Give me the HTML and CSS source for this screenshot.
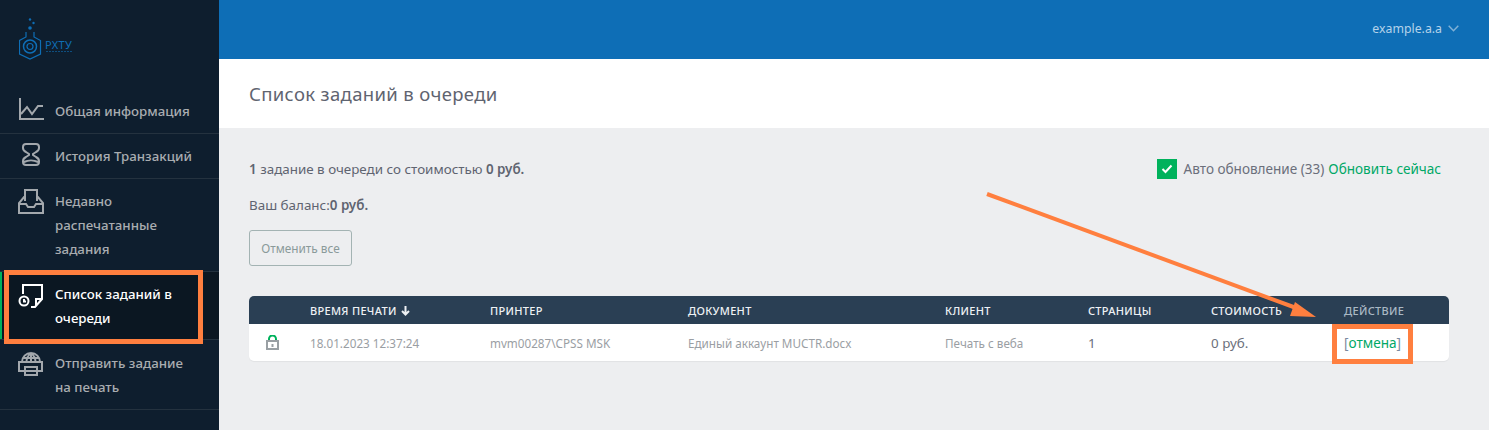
FILE: index.html
```html
<!DOCTYPE html>
<html lang="ru">
<head>
<meta charset="utf-8">
<title>Список заданий в очереди</title>
<link rel="stylesheet" href="styles.css">
</head>
<body>
<div class="app">
  <aside class="sidebar">
    <div class="logo">
      <svg width="56" height="46" viewBox="0 0 56 46" fill="none" stroke="#0e6eb6" stroke-width="1.2">
        <circle cx="11" cy="1.500" r="1.200" fill="#0e6eb6" stroke="none"/>
        <circle cx="14.500" cy="5" r="1.200" fill="#0e6eb6" stroke="none"/>
        <circle cx="11" cy="10" r="1.800" fill="#0e6eb6" stroke="none"/>
        <path d="M7 14v5l-6.500 3.500v13.500L11 41l10.500-5V22.500L15 19v-5"/>
        <circle cx="11" cy="28.500" r="6.500" stroke-width="1.500"/>
        <circle cx="11" cy="28.500" r="3"/>
        <path d="M27 33.500h26" stroke-dasharray="2 1" stroke-width="1" opacity=".6"/>
      </svg>
      <span class="logo-text">РХТУ</span>
    </div>
    <nav class="menu">
      <a class="item one">
        <svg class="ico" width="26" height="24" viewBox="0 0 26 24" fill="none" stroke="#a3a8ad" stroke-width="2"><path d="M2 0v21h24M3 16l6-7 5 7 6-8h5"/></svg>
        <span>Общая информация</span>
      </a>
      <a class="item two">
        <svg class="ico" width="26" height="24" viewBox="0 0 26 24" fill="none" stroke="#a3a8ad" stroke-width="2"><path d="M8 1h10a3 3 0 0 1 3 3v1c0 2-1 3-3 4l-3 2v1l3 2c2 1 3 2 3 4v1a3 3 0 0 1-3 3H8a3 3 0 0 1-3-3v-1c0-2 1-3 3-4l3-2v-1L8 9C6 8 5 7 5 5V4a3 3 0 0 1 3-3zM6 19c4-2 10-2 14 0"/></svg>
        <span>История Транзакций</span>
      </a>
      <a class="item three">
        <svg class="ico" width="26" height="26" viewBox="0 0 26 26" fill="none" stroke="#a3a8ad" stroke-width="2"><path d="M7 12V1h12v11M7 7L1 14v10h24V14l-6-7M1 15h7l2 3h6l2-3h7"/></svg>
        <span>Недавно распечатанные задания</span>
      </a>
      <a class="item four active">
        <svg class="ico" width="26" height="26" viewBox="0 0 26 26" fill="none" stroke="#fff" stroke-width="2"><path d="M5 11V2h19v14l-7 8h-4M24 16h-6v7"/><circle cx="6" cy="18" r="4.500"/><path d="M6 16v2.500h2"/></svg>
        <span>Список заданий в очереди</span>
      </a>
      <a class="item five">
        <svg class="ico" width="26" height="26" viewBox="0 0 26 26" fill="none" stroke="#a3a8ad" stroke-width="2"><path d="M4 11a9 9 0 0 1 18 0M13 2v9M8.500 11c0-4 2-7 4.500-9 2.500 2 4.500 5 4.500 9M5 7h16M2 11h22v9H1v-9zM7 16h12v8H7z"/></svg>
        <span>Отправить задание на печать</span>
      </a>
    </nav>
  </aside>
  <main class="main">
    <header class="topbar">
      <span class="user">example.a.a</span>
      <svg width="11" height="7" viewBox="0 0 11 7" fill="none" stroke="#7fb0d6" stroke-width="1.500"><path d="M.7 .7l4.800 5 4.800-5"/></svg>
    </header>
    <div class="title-bar"><h1>Список заданий в очереди</h1></div>
    <section class="content">
      <div class="info-row">
        <p class="summary"><b>1</b> задание в очереди со стоимостью <b>0 руб.</b></p>
        <div class="refresh">
          <span class="check"><svg width="12" height="10" viewBox="0 0 12 10" fill="none" stroke="#fff" stroke-width="2"><path d="M1.500 5l3 3 6-6.500"/></svg></span>
          <span>Авто обновление (33)</span>
          <a class="link">Обновить сейчас</a>
        </div>
      </div>
      <p class="balance">Ваш баланс:<b>0 руб.</b></p>
      <button class="cancel-all">Отменить все</button>
      <div class="table">
        <div class="row head">
          <span></span>
          <span class="sort">ВРЕМЯ ПЕЧАТИ <svg width="9" height="10" viewBox="0 0 9 10" fill="none" stroke="#eef1f4" stroke-width="2"><path d="M4.500 0v8M1 5l3.500 3.500L8 5"/></svg></span>
          <span>ПРИНТЕР</span>
          <span>ДОКУМЕНТ</span>
          <span>КЛИЕНТ</span>
          <span>СТРАНИЦЫ</span>
          <span>СТОИМОСТЬ</span>
          <span class="dim">ДЕЙСТВИЕ</span>
        </div>
        <div class="row body">
          <span class="lock"><svg width="13" height="15" viewBox="0 0 13 15" fill="none"><path d="M3 6V4a3.500 3.500 0 0 1 7 0v2" stroke="#00b25c" stroke-width="2"/><path d="M1 6h11v8H1z" stroke="#9aa0a4" stroke-width="2"/><path d="M5.500 9h2v3h-2z" fill="#9aa0a4"/></svg></span>
          <span>18.01.2023 12:37:24</span>
          <span>mvm00287\CPSS MSK</span>
          <span>Единый аккаунт MUCTR.docx</span>
          <span>Печать с веба</span>
          <span class="strong">1</span>
          <span class="strong">0 руб.</span>
          <span class="action">[<a class="link">отмена</a>]</span>
        </div>
      </div>
    </section>
  </main>
</div>
<div class="mark mark-menu"></div>
<div class="mark mark-cancel"></div>
<svg class="mark-arrow" width="360" height="140" viewBox="0 0 360 140"><path d="M3 4L315 119" stroke="#ff7f3f" stroke-width="4" fill="none"/><path d="M306 126L311 112 332 127z" fill="#ff7f3f"/></svg>
</body>
</html>
```
FILE: styles.css
```css
* { box-sizing: border-box; }
html, body { margin: 0; height: 100%; overflow: hidden; }
body { font-family: "Noto Sans", "Open Sans", sans-serif; font-size: 13.400px; color: #5f6470; background: #edeef0; position: relative; }
.app { display: flex; height: 430px; }
.sidebar { width: 219px; flex: none; background: #0e1e2e; }
.logo { height: 90px; padding: 18px 0 0 19px; display: flex; align-items: flex-start; position: relative; }
.logo svg { flex: none; }
.logo-text { position: absolute; left: 45px; top: 38px; font-size: 11px; line-height: 13px; color: #0e6eb6; letter-spacing: .3px; }
.menu { display: flex; flex-direction: column; }
.item { display: flex; align-items: flex-start; padding-left: 18px; color: #a9adb1; font-weight: 500; font-size: 13.300px; line-height: 24px; border-bottom: 1px solid #24323f; }
.item .ico { flex: none; margin-right: 11px; }
.item span { display: block; width: 140px; }
.one { height: 44px; padding-top: 9px; }
.one .ico { margin-top: -1px; }
.one span { width: 150px; }
.two { height: 45px; padding-top: 10px; }
.two span { width: 150px; }
.two .ico { margin-top: -1px; }
.three { height: 93px; padding-top: 10px; }
.three .ico { margin-top: 0; }
.four { height: 68px; padding-top: 10px; }
.four .ico { margin-top: 1px; }
.five { height: 70px; padding-top: 11px; }
.active { background: #0b1722; color: #fff; box-shadow: inset 2px 0 0 #00b25c; }
.main { flex: 1; min-width: 0; display: flex; flex-direction: column; }
.topbar { height: 59px; background: #0e6eb6; display: flex; align-items: center; justify-content: flex-end; gap: 6px; padding: 0 30px 2px 0; color: #b5d3ea; font-size: 12.300px; }
.title-bar { height: 69px; background: #fff; display: flex; align-items: center; padding-left: 30px; }
h1 { margin: 0; font-size: 18.500px; font-weight: 400; color: #5f6470; letter-spacing: .35px; }
.content { padding: 31px 48px 0 30px; flex: 1; }
.info-row { display: flex; justify-content: space-between; align-items: center; height: 20px; }
.summary, .balance { margin: 0; line-height: 20px; }
b { font-weight: 600; }
.balance { margin-top: 16px; }
.refresh { display: flex; align-items: center; gap: 4px; color: #6b6f7b; font-size: 13.550px; }
.check { width: 20px; height: 20px; background: #00b25c; display: flex; align-items: center; justify-content: center; margin-right: 3px; }
.link { color: #00a866; }
.cancel-all { display: block; margin-top: 15px; width: 103px; height: 36px; font: inherit; font-size: 11.800px; color: #8a9a9a; background: transparent; border: 1px solid #a3b3b3; border-radius: 3px; padding: 0; }
.table { margin-top: 30px; width: 1200px; border-radius: 5px; overflow: hidden; background: #fff; box-shadow: 0 1px 1px rgba(0,0,0,.05); }
.row { display: grid; grid-template-columns: 61px 180px 198px 257px 143px 123px 133px 1fr; align-items: center; }
.head { height: 28px; background: #2a3f54; color: #eef1f4; font-size: 11px; font-weight: 500; letter-spacing: .3px; }
.head .dim { color: #a9b8c4; }
.sort svg { margin-left: 1px; vertical-align: -1px; }
.body { height: 37px; color: #9a9ea3; font-size: 11.700px; }
.lock { padding-left: 17px; display: flex; }
.strong { color: #6b6f7b; font-size: 13.400px; }
.action { color: #7a8aa0; font-size: 13.600px; }
.mark, .mark-arrow { position: absolute; }
.mark { border: 5px solid #ff7f3f; pointer-events: none; }
.mark-menu { left: 4px; top: 270px; width: 199px; height: 74px; }
.mark-cancel { left: 1332px; top: 324px; width: 81px; height: 40px; }
.mark-arrow { left: 984px; top: 190px; }
```
